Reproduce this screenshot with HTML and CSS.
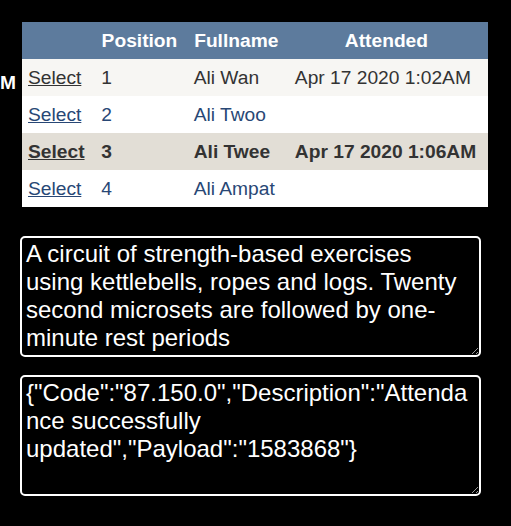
FILE: index.html
```html
<!DOCTYPE html>
<html lang="en">
<head>
<meta charset="utf-8">
<title>Attendance</title>
<link rel="stylesheet" href="styles.css">
</head>
<body>
<div class="page">
  <div class="side"><span class="side-label">M</span></div>
  <div class="main">
    <table class="grid">
      <thead>
        <tr class="grid-head">
          <th></th>
          <th>Position</th>
          <th>Fullname</th>
          <th>Attended</th>
        </tr>
      </thead>
      <tbody>
        <tr class="row">
          <td><a href="#" class="sel">Select</a></td>
          <td>1</td>
          <td>Ali Wan</td>
          <td>Apr 17 2020 1:02AM</td>
        </tr>
        <tr class="row alt">
          <td><a href="#" class="sel">Select</a></td>
          <td>2</td>
          <td>Ali Twoo</td>
          <td></td>
        </tr>
        <tr class="row selected">
          <td><a href="#" class="sel">Select</a></td>
          <td>3</td>
          <td>Ali Twee</td>
          <td>Apr 17 2020 1:06AM</td>
        </tr>
        <tr class="row alt">
          <td><a href="#" class="sel">Select</a></td>
          <td>4</td>
          <td>Ali Ampat</td>
          <td></td>
        </tr>
      </tbody>
    </table>
    <textarea class="box box-desc">A circuit of strength-based exercises using kettlebells, ropes and logs. Twenty second microsets are followed by one-minute rest periods</textarea>
    <textarea class="box box-result">{"Code":"87.150.0","Description":"Attendance successfully updated","Payload":"1583868"}</textarea>
  </div>
</div>
</body>
</html>
```

FILE: styles.css
```css
html, body {
  margin: 0;
  padding: 0;
  background: #000;
}

body {
  font-family: "Liberation Sans", Arial, sans-serif;
  color: #fff;
}

.page {
  display: flex;
  align-items: flex-start;
  padding-top: 22px;
}

.side {
  width: 20px;
  flex: 0 0 20px;
  box-sizing: border-box;
  overflow: hidden;
  display: flex;
  justify-content: flex-end;
  padding-top: 50px;
  padding-right: 4px;
}

.side-label {
  font-size: 19.2px;
  font-weight: bold;
  color: #fff;
  white-space: nowrap;
}

.main {
  display: flex;
  flex-direction: column;
  align-items: flex-start;
}

.grid {
  margin-left: 2px;
  width: 466px;
  border-collapse: collapse;
  border-spacing: 0;
  font-size: 19.2px;
}

.grid th,
.grid td {
  height: 37px;
  padding: 0 10px 0 6px;
  white-space: nowrap;
  box-sizing: border-box;
}

.grid-head {
  background: #5d7b9d;
  color: #fff;
}

.grid-head th {
  font-weight: bold;
  text-align: center;
}

.row {
  background: #f7f6f3;
  color: #333333;
}

.row td {
  text-align: left;
}

.row.alt {
  background: #ffffff;
  color: #284775;
}

.row.selected {
  background: #e2ded6;
  color: #333333;
  font-weight: bold;
}

.sel {
  color: inherit;
  text-decoration: underline;
}

.box {
  display: block;
  box-sizing: border-box;
  width: 461px;
  height: 121px;
  margin: 0;
  padding: 2px 8px 2px 4px;
  border: 2px solid #fff;
  border-radius: 5px;
  background: #000;
  color: #fff;
  color-scheme: dark;
  font-family: "Liberation Sans", Arial, sans-serif;
  font-size: 24px;
  line-height: normal;
  outline: none;
}

.box-desc {
  margin-top: 29px;
}

.box-result {
  margin-top: 18px;
}
```
